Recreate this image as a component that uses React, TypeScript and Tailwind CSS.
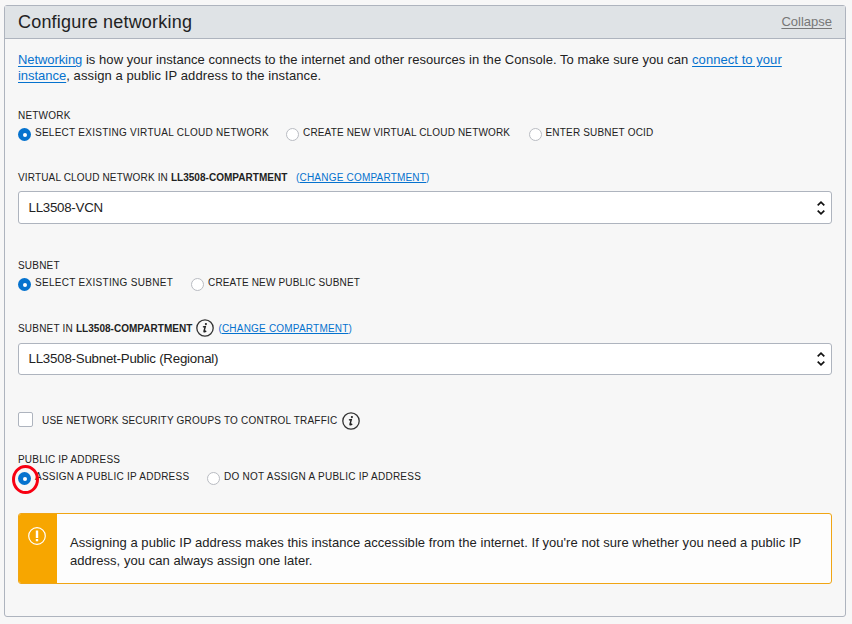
import type { ReactNode } from "react";

function Radio({ checked = false, className = "", children }: { checked?: boolean; className?: string; children: ReactNode }) {
  return (
    <label className={`flex h-[14px] shrink-0 items-start whitespace-nowrap ${className}`}>
      <span
        className={`mt-[2px] flex size-[13px] shrink-0 items-center justify-center rounded-full ${
          checked ? "bg-[#0572ce]" : "border border-[#b9bcc2] bg-white"
        }`}
      >
        {checked && <span className="size-[4px] rounded-full bg-white" />}
      </span>
      <span className="ml-[4px] leading-[14px]">{children}</span>
    </label>
  );
}

function InfoIcon({ className = "" }: { className?: string }) {
  return (
    <svg viewBox="0 0 18 18" className={`size-[18px] shrink-0 ${className}`} fill="none">
      <circle cx="9" cy="9" r="8.2" stroke="#333" strokeWidth="1.3" />
      <circle cx="9.9" cy="5" r="1.1" fill="#222" />
      <path d="M6.9 7.9 9.3 7.5 8 12.2c-.2.9.8.9 2.2-.3" stroke="#222" strokeWidth="1.4" />
    </svg>
  );
}

function Select({ className = "", children }: { className?: string; children: ReactNode }) {
  return (
    <div className={`flex items-center justify-between rounded-[3px] border border-[#aeb4be] bg-white pr-[6px] pl-[9.5px] text-[13.3px] ${className}`}>
      <span>{children}</span>
      <svg viewBox="0 0 8 14" className="h-[14px] w-[8px]" fill="none" stroke="#111" strokeWidth="1.7">
        <path d="M.7 4.4 4 1.2l3.3 3.2M.7 9.6 4 12.8l3.3-3.2" />
      </svg>
    </div>
  );
}

function Link({ children }: { children: ReactNode }) {
  return <a className="text-[#0572ce] underline underline-offset-[2px]">{children}</a>;
}

function ChangeCompartment() {
  return (
    <span className="text-[#0572ce]">
      (<a className="underline decoration-1 underline-offset-1">CHANGE COMPARTMENT</a>)
    </span>
  );
}

export default function App() {
  return (
    <div className="h-[624px] w-[852px] bg-[#f7f7f7] pt-[5px] pl-[4px] font-['Liberation_Sans',Arial,sans-serif] text-[#222]">
      <section className="h-[612px] w-[842px] rounded-[3px] border border-[#aeb4be]">
        <header className="flex h-[33px] items-center justify-between border-b border-[#aeb4be] bg-[#dfe3e6] px-[13px]">
          <h1 className="text-[18px] tracking-[0.2px]">Configure networking</h1>
          <a className="text-[13px] text-[#777] underline underline-offset-[2px]">Collapse</a>
        </header>
        <div className="px-[13px] pt-[13px] text-[10px] tracking-[0.2px]">
          <p className="h-[32px] text-[13px] leading-[16px] tracking-[0.057px] whitespace-nowrap">
            <span className="tracking-[-0.08px]"><Link>Networking</Link></span> is how your instance connects to the internet and other resources in the Console. To make sure you can{" "}
            <Link>connect to your</Link>
            <br />
            <span className="tracking-[-0.03px]"><Link>instance</Link></span>
            <span className="tracking-[0.1px]">, assign a public IP address to the instance.</span>
          </p>

          <div className="mt-[25px] h-[14px] leading-[14px]">NETWORK</div>
          <div className="mt-[3px] flex">
            <Radio checked className="w-[268px] tracking-[0.26px]">SELECT EXISTING VIRTUAL CLOUD NETWORK</Radio>
            <Radio className="w-[242.5px] tracking-[0.16px]">CREATE NEW VIRTUAL CLOUD NETWORK</Radio>
            <Radio className="tracking-[0.18px]">ENTER SUBNET OCID</Radio>
          </div>
          <div className="mt-[31px] flex h-[14px] leading-[14px] whitespace-pre">
            <span className="w-[278px] tracking-[0.16px]">VIRTUAL CLOUD NETWORK IN <b className="tracking-[0.03px]">LL3508-COMPARTMENT</b></span>
            <ChangeCompartment />
          </div>
          <Select className="mt-[6px] h-[33px] tracking-[-0.25px]">LL3508-VCN</Select>

          <div className="mt-[35px] h-[14px] leading-[14px]">SUBNET</div>
          <div className="mt-[3px] flex">
            <Radio checked className="w-[173px] tracking-[0.3px]">SELECT EXISTING SUBNET</Radio>
            <Radio className="tracking-[0.16px]">CREATE NEW PUBLIC SUBNET</Radio>
          </div>
          <div className="mt-[29px] flex h-[18px] items-center whitespace-pre">
            <span className="pt-px">SUBNET IN <b className="tracking-[0.03px]">LL3508-COMPARTMENT</b></span>
            <InfoIcon className="mx-[4px]" />
            <span className="pt-px"><ChangeCompartment /></span>
          </div>
          <Select className="mt-[6px] h-[32px] tracking-[-0.22px]">LL3508-Subnet-Public (Regional)</Select>

          <div className="mt-[37px] flex h-[18px] items-center">
            <span className="mb-[3px] size-[15px] rounded-[2px] border border-[#aeb4be] bg-white" />
            <span className="mb-[2px] ml-[9px]">USE NETWORK SECURITY GROUPS TO CONTROL TRAFFIC</span>
            <InfoIcon className="ml-[5px]" />
          </div>

          <div className="mt-[23px] h-[14px] leading-[14px]">PUBLIC IP ADDRESS</div>
          <div className="relative mt-[3px] flex tracking-[0.26px]">
            <Radio checked className="w-[189px]">ASSIGN A PUBLIC IP ADDRESS</Radio>
            <Radio>DO NOT ASSIGN A PUBLIC IP ADDRESS</Radio>
            <span className="absolute top-[-5px] left-[-6px] h-[29px] w-[27px] rounded-[50%] border-[3px] border-[#f80012]" />
          </div>

          <div className="mt-[29px] flex h-[71px] overflow-hidden rounded-[3px] border border-[#f0a514] bg-[#fdfdfd]">
            <div className="flex w-[38px] shrink-0 bg-[#f7a600] pt-[13px] pl-[9px]">
              <svg viewBox="0 0 18 18" className="size-[18px]" fill="none">
                <circle cx="9" cy="9" r="8.3" stroke="#fff" strokeWidth="1.2" />
                <path d="M9 3.5v7.5M9 12v2.2" stroke="#fff" strokeWidth="2.4" />
              </svg>
            </div>
            <p className="pt-[20px] pl-[13px] text-[13px] leading-[18px] tracking-[0.045px] whitespace-nowrap">
              Assigning a public IP address makes this instance accessible from the internet. If you're not sure whether you need a public IP
              <br />
              address, you can always assign one later.
            </p>
          </div>
        </div>
      </section>
    </div>
  );
}
